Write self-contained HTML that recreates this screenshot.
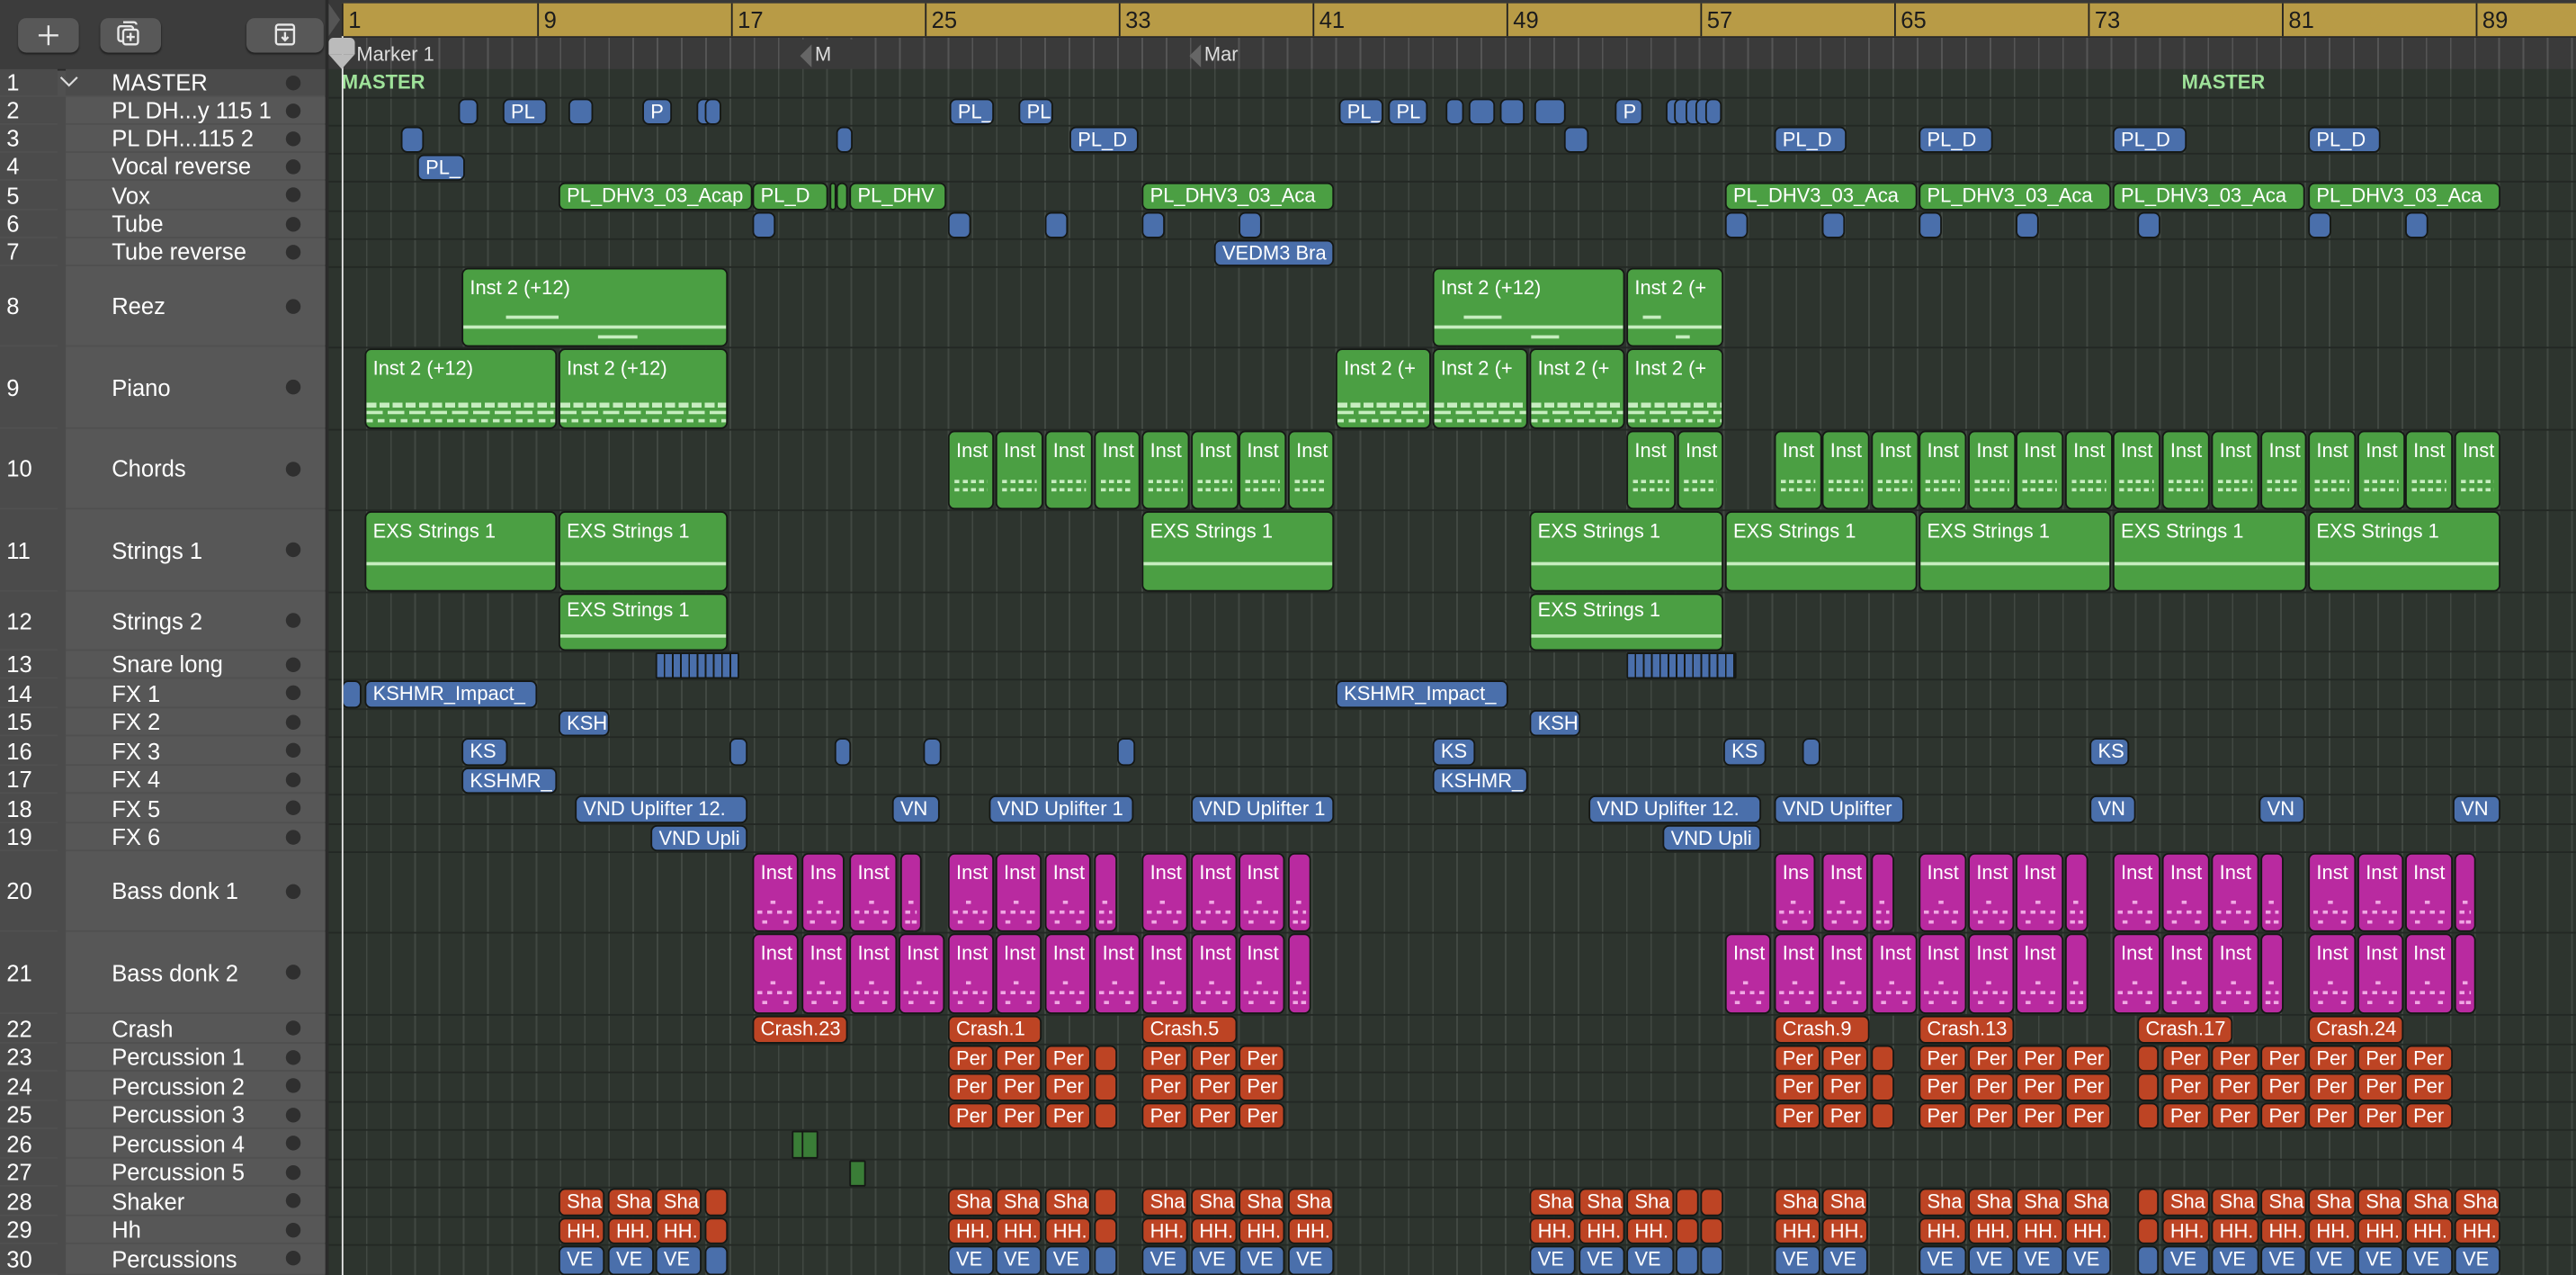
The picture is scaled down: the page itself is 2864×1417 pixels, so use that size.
<!DOCTYPE html>
<html><head><meta charset="utf-8">
<style>
html,body{margin:0;padding:0;background:#2d342e;width:2864px;height:1416px;overflow:hidden}
#w{position:absolute;left:0;top:0;width:1568px;height:776px;transform:scale(1.826531);transform-origin:0 0;font-family:"Liberation Sans",sans-serif;background:#2d342e;overflow:hidden}
.row{position:absolute;left:0;width:1568px}
.row>b{position:absolute;top:0;bottom:0;box-sizing:border-box;border:1px solid #151815;border-radius:4px;color:#fff;font:400 12px/15px "Liberation Sans",sans-serif;padding:0 4px;overflow:hidden;white-space:nowrap}
.b>b{background:#4a6fab}
.g>b{background:#4b9f43}
.m>b{background:#b92aa0}
.o>b{background:#bd4424}
.d>b{background:#3a7d37}
.gt>b{padding-top:4px;background:linear-gradient(#c6edbf,#c6edbf) no-repeat 0 34px/100% 2px,linear-gradient(#c6edbf,#c6edbf) no-repeat 20% 28px/20% 2px,linear-gradient(#c6edbf,#c6edbf) no-repeat 60% 40px/15% 2px,#4b9f43}
.pn>b{padding-top:4px;background:repeating-linear-gradient(90deg,#c6edbf 0 6px,transparent 6px 8px) no-repeat 0 32px/100% 3px,repeating-linear-gradient(90deg,#c6edbf 0 10px,transparent 10px 13px) no-repeat 0 37px/100% 2px,repeating-linear-gradient(90deg,#c6edbf 0 4px,transparent 4px 7px) no-repeat 0 42px/100% 2px,#4b9f43}
.ch>b{padding-top:4px;background:repeating-linear-gradient(90deg,#c6edbf 0 3px,transparent 3px 5px) no-repeat 3px 29px/calc(100% - 6px) 2px,repeating-linear-gradient(90deg,#c6edbf 0 3px,transparent 3px 5px) no-repeat 3px 34px/calc(100% - 6px) 2px,#4b9f43}
.st>b{padding-top:4px;background:linear-gradient(#c6edbf,#c6edbf) no-repeat 0 30px/100% 2px,#4b9f43}
.s2>b{padding-top:2px;background:linear-gradient(#c6edbf,#c6edbf) no-repeat 0 24px/100% 2px,#4b9f43}
.m>b{padding-top:4px;background:repeating-linear-gradient(90deg,#f0a8e3 0 3px,transparent 3px 6px) no-repeat 2px 34px/calc(100% - 4px) 2px,linear-gradient(#f0a8e3,#f0a8e3) no-repeat 45% 28px/3px 2px,linear-gradient(#f0a8e3,#f0a8e3) no-repeat 20% 40px/3px 2px,linear-gradient(#f0a8e3,#f0a8e3) no-repeat 80% 40px/3px 2px,#b92aa0}
.sn>b{background:repeating-linear-gradient(90deg,#4a6fab 0 4px,#151815 4px 5px)}
#grid{position:absolute;left:208px;top:42px;width:1360px;height:734px;background:repeating-linear-gradient(90deg,#414842 0 1px,transparent 1px 14.75px)}
.hl{position:absolute;left:200px;width:1368px;height:1px;background:#232824}
#hdr{position:absolute;left:0;top:0;width:198px;height:776px;background:#505050}
#tb{position:absolute;left:0;top:0;width:198px;height:42px;background:#3c3c3c;border-bottom:1px solid #2a2a2a}
.btn{position:absolute;top:11px;height:21px;background:#585858;border-radius:5px;box-shadow:0 1px 1px #222}
.tr{position:absolute;left:0;width:198px;color:#fff;font:14px "Liberation Sans",sans-serif}
.tr .n{position:absolute;left:0;top:0;bottom:1px;width:35px;background:#4b4b4b;padding-left:4px;box-sizing:border-box}
.tr .nm{position:absolute;left:40px;right:0;top:0;bottom:1px;background:#575757;padding-left:28px;box-sizing:border-box}
.tr .dt{position:absolute;left:174px;width:9px;height:9px;border-radius:50%;background:#2f2f2f}
#ruler{position:absolute;left:200px;top:0;width:1368px;height:42px;background:#383838}
#yel{position:absolute;left:208px;top:2px;width:1360px;height:20px;background:#b89b46;border-bottom:1px solid #2a2a2a}
.bn{position:absolute;top:2px;height:20px;border-left:1px solid #222;color:#1c1c1c;font:14px/20px "Liberation Sans",sans-serif;padding-left:3px}
#mk{position:absolute;left:208px;top:23px;width:1360px;height:19px;background:repeating-linear-gradient(90deg,#555 0 1px,transparent 1px 14.75px),#3a3a3a}
.mt{position:absolute;top:24px;color:#ddd;font:12px/18px "Liberation Sans",sans-serif}
.ms{position:absolute;top:43px;color:#9fe39a;font:700 12px/15px "Liberation Sans",sans-serif}
</style></head><body><div id="w">

<div id="ruler"></div>
<div id="yel"></div>
<div style="position:absolute;left:200px;top:2px;width:0;height:0;border-top:10px solid transparent;border-bottom:10px solid transparent;border-left:7px solid #555"></div>
<div class="bn" style="left:208px">1</div>
<div class="bn" style="left:327px">9</div>
<div class="bn" style="left:445px">17</div>
<div class="bn" style="left:563px">25</div>
<div class="bn" style="left:681px">33</div>
<div class="bn" style="left:799px">41</div>
<div class="bn" style="left:917px">49</div>
<div class="bn" style="left:1035px">57</div>
<div class="bn" style="left:1153px">65</div>
<div class="bn" style="left:1271px">73</div>
<div class="bn" style="left:1389px">81</div>
<div class="bn" style="left:1507px">89</div>
<div id="mk"></div>
<div class="mt" style="left:217px">Marker 1</div>
<div style="position:absolute;left:487px;top:24px;width:40px;height:18px;background:#3a3a3a"></div>
<div style="position:absolute;left:487px;top:27px;width:0;height:0;border-top:7px solid transparent;border-bottom:7px solid transparent;border-right:7px solid #666"></div>
<div class="mt" style="left:496px">M</div>
<div style="position:absolute;left:724px;top:27px;width:0;height:0;border-top:7px solid transparent;border-bottom:7px solid transparent;border-right:7px solid #666"></div>
<div class="mt" style="left:733px">Mar</div>

<div id="grid"></div>
<div class="hl" style="top:59px"></div><div class="hl" style="top:76px"></div><div class="hl" style="top:93px"></div><div class="hl" style="top:110px"></div><div class="hl" style="top:128px"></div><div class="hl" style="top:145px"></div><div class="hl" style="top:162px"></div><div class="hl" style="top:211px"></div><div class="hl" style="top:261px"></div><div class="hl" style="top:310px"></div><div class="hl" style="top:360px"></div><div class="hl" style="top:396px"></div><div class="hl" style="top:413px"></div><div class="hl" style="top:431px"></div><div class="hl" style="top:448px"></div><div class="hl" style="top:466px"></div><div class="hl" style="top:483px"></div><div class="hl" style="top:501px"></div><div class="hl" style="top:518px"></div><div class="hl" style="top:567px"></div><div class="hl" style="top:617px"></div><div class="hl" style="top:635px"></div><div class="hl" style="top:652px"></div><div class="hl" style="top:670px"></div><div class="hl" style="top:687px"></div><div class="hl" style="top:705px"></div><div class="hl" style="top:722px"></div><div class="hl" style="top:740px"></div><div class="hl" style="top:757px"></div>

<div class="ms" style="left:208px">MASTER</div>
<div class="ms" style="left:1328px">MASTER</div>

<!-- row 2 -->
<div class="row b" style="top:60px;height:16px"><b style="left:279px;width:12px"></b><b style="left:306px;width:27px">PL</b><b style="left:346px;width:15px"></b><b style="left:391px;width:18px">P</b><b style="left:424px;width:5px"></b><b style="left:429px;width:7px"></b><b style="left:578px;width:27px">PL_</b><b style="left:620px;width:21px">PL</b><b style="left:815px;width:27px">PL_</b><b style="left:845px;width:24px">PL</b><b style="left:880px;width:11px"></b><b style="left:894px;width:16px"></b><b style="left:913px;width:15px"></b><b style="left:934px;width:19px"></b><b style="left:983px;width:17px">P</b><b style="left:1014px;width:5px"></b><b style="left:1019px;width:6px"></b><b style="left:1026px;width:6px"></b><b style="left:1032px;width:6px"></b><b style="left:1038px;width:6px"></b></div>
<!-- row 3 -->
<div class="row b" style="top:77px;height:16px"><b style="left:244px;width:14px"></b><b style="left:509px;width:9px"></b><b style="left:651px;width:42px">PL_D</b><b style="left:952px;width:15px"></b><b style="left:1080px;width:44px">PL_D</b><b style="left:1168px;width:45px">PL_D</b><b style="left:1286px;width:45px">PL_D</b><b style="left:1405px;width:44px">PL_D</b></div>
<!-- row 4 -->
<div class="row b" style="top:94px;height:16px"><b style="left:254px;width:29px">PL_</b></div>
<!-- row 5 -->
<div class="row g" style="top:111px;height:17px"><b style="left:340px;width:118px">PL_DHV3_03_Acap</b><b style="left:458px;width:46px">PL_D</b><b style="left:505px;width:4px;padding:0"></b><b style="left:509px;width:7px;padding:0"></b><b style="left:517px;width:59px">PL_DHV</b><b style="left:695px;width:117px">PL_DHV3_03_Aca</b><b style="left:1050px;width:117px">PL_DHV3_03_Aca</b><b style="left:1168px;width:117px">PL_DHV3_03_Aca</b><b style="left:1286px;width:117px">PL_DHV3_03_Aca</b><b style="left:1405px;width:117px">PL_DHV3_03_Aca</b></div>
<!-- row 6 -->
<div class="row b" style="top:129px;height:16px"><b style="left:458px;width:14px"></b><b style="left:577px;width:14px"></b><b style="left:636px;width:14px"></b><b style="left:695px;width:14px"></b><b style="left:754px;width:14px"></b><b style="left:1050px;width:14px"></b><b style="left:1109px;width:14px"></b><b style="left:1168px;width:14px"></b><b style="left:1227px;width:14px"></b><b style="left:1301px;width:14px"></b><b style="left:1405px;width:14px"></b><b style="left:1464px;width:14px"></b></div>
<!-- row 7 -->
<div class="row b" style="top:146px;height:16px"><b style="left:739px;width:73px">VEDM3 Bra</b></div>
<!-- row 8 -->
<div class="row gt" style="top:163px;height:48px"><b style="left:281px;width:162px">Inst 2 (+12)</b><b style="left:872px;width:117px">Inst 2 (+12)</b><b style="left:990px;width:59px">Inst 2 (+</b></div>
<!-- row 9 -->
<div class="row pn" style="top:212px;height:49px"><b style="left:222px;width:117px">Inst 2 (+12)</b><b style="left:340px;width:103px">Inst 2 (+12)</b><b style="left:813px;width:58px">Inst 2 (+</b><b style="left:872px;width:58px">Inst 2 (+</b><b style="left:931px;width:58px">Inst 2 (+</b><b style="left:990px;width:59px">Inst 2 (+</b></div>
<!-- row 10 -->
<div class="row ch" style="top:262px;height:48px"><b style="left:577px;width:28px">Inst</b><b style="left:606px;width:29px">Inst</b><b style="left:636px;width:29px">Inst</b><b style="left:666px;width:28px">Inst</b><b style="left:695px;width:29px">Inst</b><b style="left:725px;width:29px">Inst</b><b style="left:754px;width:29px">Inst</b><b style="left:784px;width:28px">Inst</b><b style="left:990px;width:30px">Inst</b><b style="left:1021px;width:28px">Inst</b><b style="left:1080px;width:29px">Inst</b><b style="left:1109px;width:29px">Inst</b><b style="left:1139px;width:29px">Inst</b><b style="left:1168px;width:29px">Inst</b><b style="left:1198px;width:29px">Inst</b><b style="left:1227px;width:29px">Inst</b><b style="left:1257px;width:29px">Inst</b><b style="left:1286px;width:29px">Inst</b><b style="left:1316px;width:29px">Inst</b><b style="left:1346px;width:29px">Inst</b><b style="left:1376px;width:28px">Inst</b><b style="left:1405px;width:29px">Inst</b><b style="left:1435px;width:29px">Inst</b><b style="left:1464px;width:29px">Inst</b><b style="left:1494px;width:28px">Inst</b></div>
<!-- row 11 -->
<div class="row st" style="top:311px;height:49px"><b style="left:222px;width:117px">EXS Strings 1</b><b style="left:340px;width:103px">EXS Strings 1</b><b style="left:695px;width:117px">EXS Strings 1</b><b style="left:931px;width:118px">EXS Strings 1</b><b style="left:1050px;width:117px">EXS Strings 1</b><b style="left:1168px;width:117px">EXS Strings 1</b><b style="left:1286px;width:118px">EXS Strings 1</b><b style="left:1405px;width:117px">EXS Strings 1</b></div>
<!-- row 12 -->
<div class="row s2" style="top:361px;height:35px"><b style="left:340px;width:103px">EXS Strings 1</b><b style="left:931px;width:118px">EXS Strings 1</b></div>
<!-- row 13 -->
<div class="row sn" style="top:397px;height:16px"><b style="left:399px;width:51px;border-radius:1px"></b><b style="left:990px;width:67px;border-radius:1px"></b></div>
<!-- row 14 -->
<div class="row b" style="top:414px;height:17px"><b style="left:208px;width:12px"></b><b style="left:222px;width:105px">KSHMR_Impact_</b><b style="left:813px;width:105px">KSHMR_Impact_</b></div>
<!-- row 15 -->
<div class="row b" style="top:432px;height:16px"><b style="left:340px;width:31px">KSH</b><b style="left:931px;width:31px">KSH</b></div>
<!-- row 16 -->
<div class="row b" style="top:449px;height:17px"><b style="left:281px;width:28px">KS</b><b style="left:444px;width:11px"></b><b style="left:508px;width:9px"></b><b style="left:562px;width:11px"></b><b style="left:680px;width:11px"></b><b style="left:872px;width:26px">KS</b><b style="left:1049px;width:26px">KS</b><b style="left:1097px;width:11px"></b><b style="left:1272px;width:24px">KS</b></div>
<!-- row 17 -->
<div class="row b" style="top:467px;height:16px"><b style="left:281px;width:58px">KSHMR_</b><b style="left:872px;width:58px">KSHMR_</b></div>
<!-- row 18 -->
<div class="row b" style="top:484px;height:17px"><b style="left:350px;width:105px">VND Uplifter 12.</b><b style="left:543px;width:29px">VN</b><b style="left:602px;width:88px">VND Uplifter 1</b><b style="left:725px;width:87px">VND Uplifter 1</b><b style="left:967px;width:105px">VND Uplifter 12.</b><b style="left:1080px;width:79px">VND Uplifter</b><b style="left:1272px;width:28px">VN</b><b style="left:1375px;width:28px">VN</b><b style="left:1493px;width:29px">VN</b></div>
<!-- row 19 -->
<div class="row b" style="top:502px;height:16px"><b style="left:396px;width:59px">VND Upli</b><b style="left:1012px;width:60px">VND Upli</b></div>
<!-- row 20 -->
<div class="row m" style="top:519px;height:48px"><b style="left:458px;width:28px">Inst</b><b style="left:488px;width:26px">Ins</b><b style="left:517px;width:29px">Inst</b><b style="left:548px;width:13px"></b><b style="left:577px;width:28px">Inst</b><b style="left:606px;width:28px">Inst</b><b style="left:636px;width:28px">Inst</b><b style="left:666px;width:14px"></b><b style="left:695px;width:28px">Inst</b><b style="left:725px;width:28px">Inst</b><b style="left:754px;width:28px">Inst</b><b style="left:784px;width:14px"></b><b style="left:1080px;width:25px">Ins</b><b style="left:1109px;width:28px">Inst</b><b style="left:1139px;width:14px"></b><b style="left:1168px;width:29px">Inst</b><b style="left:1198px;width:28px">Inst</b><b style="left:1227px;width:29px">Inst</b><b style="left:1257px;width:14px"></b><b style="left:1286px;width:29px">Inst</b><b style="left:1316px;width:29px">Inst</b><b style="left:1346px;width:29px">Inst</b><b style="left:1376px;width:14px"></b><b style="left:1405px;width:29px">Inst</b><b style="left:1435px;width:28px">Inst</b><b style="left:1464px;width:29px">Inst</b><b style="left:1494px;width:13px"></b></div>
<!-- row 21 -->
<div class="row m" style="top:568px;height:49px"><b style="left:458px;width:28px">Inst</b><b style="left:488px;width:28px">Inst</b><b style="left:517px;width:29px">Inst</b><b style="left:547px;width:28px">Inst</b><b style="left:577px;width:28px">Inst</b><b style="left:606px;width:28px">Inst</b><b style="left:636px;width:28px">Inst</b><b style="left:666px;width:28px">Inst</b><b style="left:695px;width:28px">Inst</b><b style="left:725px;width:28px">Inst</b><b style="left:754px;width:28px">Inst</b><b style="left:784px;width:14px"></b><b style="left:1050px;width:28px">Inst</b><b style="left:1080px;width:28px">Inst</b><b style="left:1109px;width:28px">Inst</b><b style="left:1139px;width:28px">Inst</b><b style="left:1168px;width:29px">Inst</b><b style="left:1198px;width:28px">Inst</b><b style="left:1227px;width:29px">Inst</b><b style="left:1257px;width:14px"></b><b style="left:1286px;width:29px">Inst</b><b style="left:1316px;width:29px">Inst</b><b style="left:1346px;width:29px">Inst</b><b style="left:1376px;width:14px"></b><b style="left:1405px;width:29px">Inst</b><b style="left:1435px;width:28px">Inst</b><b style="left:1464px;width:29px">Inst</b><b style="left:1494px;width:13px"></b></div>
<!-- row 22 -->
<div class="row o" style="top:618px;height:17px"><b style="left:458px;width:58px">Crash.23</b><b style="left:577px;width:57px">Crash.1</b><b style="left:695px;width:58px">Crash.5</b><b style="left:1080px;width:58px">Crash.9</b><b style="left:1168px;width:58px">Crash.13</b><b style="left:1301px;width:58px">Crash.17</b><b style="left:1405px;width:58px">Crash.24</b></div>
<!-- rows 23-25 -->
<div class="row o" style="top:636px;height:16px"><b style="left:577px;width:28px">Per</b><b style="left:606px;width:28px">Per</b><b style="left:636px;width:28px">Per</b><b style="left:666px;width:14px"></b><b style="left:695px;width:28px">Per</b><b style="left:725px;width:28px">Per</b><b style="left:754px;width:28px">Per</b><b style="left:1080px;width:28px">Per</b><b style="left:1109px;width:28px">Per</b><b style="left:1139px;width:14px"></b><b style="left:1168px;width:29px">Per</b><b style="left:1198px;width:28px">Per</b><b style="left:1227px;width:29px">Per</b><b style="left:1257px;width:28px">Per</b><b style="left:1301px;width:13px"></b><b style="left:1316px;width:29px">Per</b><b style="left:1346px;width:29px">Per</b><b style="left:1376px;width:28px">Per</b><b style="left:1405px;width:29px">Per</b><b style="left:1435px;width:28px">Per</b><b style="left:1464px;width:29px">Per</b></div>
<div class="row o" style="top:653px;height:17px"><b style="left:577px;width:28px">Per</b><b style="left:606px;width:28px">Per</b><b style="left:636px;width:28px">Per</b><b style="left:666px;width:14px"></b><b style="left:695px;width:28px">Per</b><b style="left:725px;width:28px">Per</b><b style="left:754px;width:28px">Per</b><b style="left:1080px;width:28px">Per</b><b style="left:1109px;width:28px">Per</b><b style="left:1139px;width:14px"></b><b style="left:1168px;width:29px">Per</b><b style="left:1198px;width:28px">Per</b><b style="left:1227px;width:29px">Per</b><b style="left:1257px;width:28px">Per</b><b style="left:1301px;width:13px"></b><b style="left:1316px;width:29px">Per</b><b style="left:1346px;width:29px">Per</b><b style="left:1376px;width:28px">Per</b><b style="left:1405px;width:29px">Per</b><b style="left:1435px;width:28px">Per</b><b style="left:1464px;width:29px">Per</b></div>
<div class="row o" style="top:671px;height:16px"><b style="left:577px;width:28px">Per</b><b style="left:606px;width:28px">Per</b><b style="left:636px;width:28px">Per</b><b style="left:666px;width:14px"></b><b style="left:695px;width:28px">Per</b><b style="left:725px;width:28px">Per</b><b style="left:754px;width:28px">Per</b><b style="left:1080px;width:28px">Per</b><b style="left:1109px;width:28px">Per</b><b style="left:1139px;width:14px"></b><b style="left:1168px;width:29px">Per</b><b style="left:1198px;width:28px">Per</b><b style="left:1227px;width:29px">Per</b><b style="left:1257px;width:28px">Per</b><b style="left:1301px;width:13px"></b><b style="left:1316px;width:29px">Per</b><b style="left:1346px;width:29px">Per</b><b style="left:1376px;width:28px">Per</b><b style="left:1405px;width:29px">Per</b><b style="left:1435px;width:28px">Per</b><b style="left:1464px;width:29px">Per</b></div>
<!-- row 26,27 -->
<div class="row d" style="top:688px;height:17px"><b style="left:482px;width:7px;border-radius:1px"></b><b style="left:488px;width:8px;border-radius:1px"></b></div>
<div class="row d" style="top:706px;height:16px"><b style="left:517px;width:9px;border-radius:1px"></b></div>
<!-- row 28 -->
<div class="row o" style="top:723px;height:17px"><b style="left:340px;width:28px">Sha</b><b style="left:370px;width:28px">Sha</b><b style="left:399px;width:28px">Sha</b><b style="left:429px;width:14px"></b><b style="left:577px;width:28px">Sha</b><b style="left:606px;width:28px">Sha</b><b style="left:636px;width:28px">Sha</b><b style="left:666px;width:14px"></b><b style="left:695px;width:28px">Sha</b><b style="left:725px;width:28px">Sha</b><b style="left:754px;width:28px">Sha</b><b style="left:784px;width:28px">Sha</b><b style="left:931px;width:28px">Sha</b><b style="left:961px;width:28px">Sha</b><b style="left:990px;width:29px">Sha</b><b style="left:1020px;width:14px"></b><b style="left:1035px;width:14px"></b><b style="left:1080px;width:28px">Sha</b><b style="left:1109px;width:28px">Sha</b><b style="left:1168px;width:29px">Sha</b><b style="left:1198px;width:28px">Sha</b><b style="left:1227px;width:29px">Sha</b><b style="left:1257px;width:28px">Sha</b><b style="left:1301px;width:13px"></b><b style="left:1316px;width:29px">Sha</b><b style="left:1346px;width:29px">Sha</b><b style="left:1376px;width:28px">Sha</b><b style="left:1405px;width:29px">Sha</b><b style="left:1435px;width:28px">Sha</b><b style="left:1464px;width:29px">Sha</b><b style="left:1494px;width:28px">Sha</b></div>
<!-- row 29 -->
<div class="row o" style="top:741px;height:16px"><b style="left:340px;width:28px">HH.</b><b style="left:370px;width:28px">HH.</b><b style="left:399px;width:28px">HH.</b><b style="left:429px;width:14px"></b><b style="left:577px;width:28px">HH.</b><b style="left:606px;width:28px">HH.</b><b style="left:636px;width:28px">HH.</b><b style="left:666px;width:14px"></b><b style="left:695px;width:28px">HH.</b><b style="left:725px;width:28px">HH.</b><b style="left:754px;width:28px">HH.</b><b style="left:784px;width:28px">HH.</b><b style="left:931px;width:28px">HH.</b><b style="left:961px;width:28px">HH.</b><b style="left:990px;width:29px">HH.</b><b style="left:1020px;width:14px"></b><b style="left:1035px;width:14px"></b><b style="left:1080px;width:28px">HH.</b><b style="left:1109px;width:28px">HH.</b><b style="left:1168px;width:29px">HH.</b><b style="left:1198px;width:28px">HH.</b><b style="left:1227px;width:29px">HH.</b><b style="left:1257px;width:28px">HH.</b><b style="left:1301px;width:13px"></b><b style="left:1316px;width:29px">HH.</b><b style="left:1346px;width:29px">HH.</b><b style="left:1376px;width:28px">HH.</b><b style="left:1405px;width:29px">HH.</b><b style="left:1435px;width:28px">HH.</b><b style="left:1464px;width:29px">HH.</b><b style="left:1494px;width:28px">HH.</b></div>
<!-- row 30 -->
<div class="row b" style="top:758px;height:18px"><b style="left:340px;width:28px">VE</b><b style="left:370px;width:28px">VE</b><b style="left:399px;width:28px">VE</b><b style="left:429px;width:14px"></b><b style="left:577px;width:28px">VE</b><b style="left:606px;width:28px">VE</b><b style="left:636px;width:28px">VE</b><b style="left:666px;width:14px"></b><b style="left:695px;width:28px">VE</b><b style="left:725px;width:28px">VE</b><b style="left:754px;width:28px">VE</b><b style="left:784px;width:28px">VE</b><b style="left:931px;width:28px">VE</b><b style="left:961px;width:28px">VE</b><b style="left:990px;width:29px">VE</b><b style="left:1020px;width:14px"></b><b style="left:1035px;width:14px"></b><b style="left:1080px;width:28px">VE</b><b style="left:1109px;width:28px">VE</b><b style="left:1168px;width:29px">VE</b><b style="left:1198px;width:28px">VE</b><b style="left:1227px;width:29px">VE</b><b style="left:1257px;width:28px">VE</b><b style="left:1301px;width:13px"></b><b style="left:1316px;width:29px">VE</b><b style="left:1346px;width:29px">VE</b><b style="left:1376px;width:28px">VE</b><b style="left:1405px;width:29px">VE</b><b style="left:1435px;width:28px">VE</b><b style="left:1464px;width:29px">VE</b><b style="left:1494px;width:28px">VE</b></div>

<!-- playhead -->
<div style="position:absolute;left:208px;top:22px;width:1px;height:754px;background:#e8e8e8"></div>
<div style="position:absolute;left:200px;top:23px;width:16px;height:10px;background:#bbb;border-radius:3px 3px 0 0"></div>
<div style="position:absolute;left:200px;top:33px;width:0;height:0;border-left:8px solid transparent;border-right:8px solid transparent;border-top:9px solid #bbb"></div>

<!-- header -->
<div id="hdr"></div>
<div style="position:absolute;left:198px;top:0;width:2px;height:776px;background:#2a2a2a"></div>
<div id="tb"></div>
<div class="btn" style="left:11px;width:37px"></div>
<div class="btn" style="left:61px;width:37px"></div>
<div class="btn" style="left:150px;width:47px"></div>
<svg style="position:absolute;left:0;top:0" width="198" height="42" fill="none" stroke="#e8e8e8" stroke-width="1.3">
<path d="M29.5 15.5v12M23.5 21.5h12"/>
<rect x="72" y="16" width="9" height="9" rx="1.5"/><path d="M75 13.5h6.5a1.5 1.5 0 0 1 1.5 1.5v0" /><rect x="75" y="18" width="9" height="9" rx="1.5" fill="#585858"/><path d="M79.5 20v5M77 22.5h5"/>
<rect x="168" y="15" width="11" height="12" rx="1.5"/><path d="M168 18h11M173.5 19.5v5M171.5 22.5l2 2 2-2"/>
</svg>

<div class="tr" style="top:42px;height:17px;line-height:17px"><div class="n" style="background:#4b4b4b">1</div><div class="nm" style="background:#4b4b4b">MASTER</div><div class="dt" style="top:4px"></div></div>
<svg style="position:absolute;left:36px;top:46px" width="12" height="8" fill="none" stroke="#ddd" stroke-width="1.2"><path d="M1 1l5 5 5-5"/></svg>
<div class="tr" style="top:59px;height:17px;line-height:17px"><div class="n">2</div><div class="nm">PL DH...y 115 1</div><div class="dt" style="top:4px"></div></div>
<div class="tr" style="top:76px;height:17px;line-height:17px"><div class="n">3</div><div class="nm">PL DH...115 2</div><div class="dt" style="top:4px"></div></div>
<div class="tr" style="top:93px;height:17px;line-height:17px"><div class="n">4</div><div class="nm">Vocal reverse</div><div class="dt" style="top:4px"></div></div>
<div class="tr" style="top:110px;height:18px;line-height:18px"><div class="n">5</div><div class="nm">Vox</div><div class="dt" style="top:4px"></div></div>
<div class="tr" style="top:128px;height:17px;line-height:17px"><div class="n">6</div><div class="nm">Tube</div><div class="dt" style="top:4px"></div></div>
<div class="tr" style="top:145px;height:17px;line-height:17px"><div class="n">7</div><div class="nm">Tube reverse</div><div class="dt" style="top:4px"></div></div>
<div class="tr" style="top:162px;height:49px;line-height:49px"><div class="n">8</div><div class="nm">Reez</div><div class="dt" style="top:20px"></div></div>
<div class="tr" style="top:211px;height:50px;line-height:50px"><div class="n">9</div><div class="nm">Piano</div><div class="dt" style="top:20px"></div></div>
<div class="tr" style="top:261px;height:49px;line-height:49px"><div class="n">10</div><div class="nm">Chords</div><div class="dt" style="top:20px"></div></div>
<div class="tr" style="top:310px;height:50px;line-height:50px"><div class="n">11</div><div class="nm">Strings 1</div><div class="dt" style="top:20px"></div></div>
<div class="tr" style="top:360px;height:36px;line-height:36px"><div class="n">12</div><div class="nm">Strings 2</div><div class="dt" style="top:13px"></div></div>
<div class="tr" style="top:396px;height:17px;line-height:17px"><div class="n">13</div><div class="nm">Snare long</div><div class="dt" style="top:4px"></div></div>
<div class="tr" style="top:413px;height:18px;line-height:18px"><div class="n">14</div><div class="nm">FX 1</div><div class="dt" style="top:4px"></div></div>
<div class="tr" style="top:431px;height:17px;line-height:17px"><div class="n">15</div><div class="nm">FX 2</div><div class="dt" style="top:4px"></div></div>
<div class="tr" style="top:448px;height:18px;line-height:18px"><div class="n">16</div><div class="nm">FX 3</div><div class="dt" style="top:4px"></div></div>
<div class="tr" style="top:466px;height:17px;line-height:17px"><div class="n">17</div><div class="nm">FX 4</div><div class="dt" style="top:4px"></div></div>
<div class="tr" style="top:483px;height:18px;line-height:18px"><div class="n">18</div><div class="nm">FX 5</div><div class="dt" style="top:4px"></div></div>
<div class="tr" style="top:501px;height:17px;line-height:17px"><div class="n">19</div><div class="nm">FX 6</div><div class="dt" style="top:4px"></div></div>
<div class="tr" style="top:518px;height:49px;line-height:49px"><div class="n">20</div><div class="nm">Bass donk 1</div><div class="dt" style="top:20px"></div></div>
<div class="tr" style="top:567px;height:50px;line-height:50px"><div class="n">21</div><div class="nm">Bass donk 2</div><div class="dt" style="top:20px"></div></div>
<div class="tr" style="top:617px;height:18px;line-height:18px"><div class="n">22</div><div class="nm">Crash</div><div class="dt" style="top:4px"></div></div>
<div class="tr" style="top:635px;height:17px;line-height:17px"><div class="n">23</div><div class="nm">Percussion 1</div><div class="dt" style="top:4px"></div></div>
<div class="tr" style="top:652px;height:18px;line-height:18px"><div class="n">24</div><div class="nm">Percussion 2</div><div class="dt" style="top:4px"></div></div>
<div class="tr" style="top:670px;height:17px;line-height:17px"><div class="n">25</div><div class="nm">Percussion 3</div><div class="dt" style="top:4px"></div></div>
<div class="tr" style="top:687px;height:18px;line-height:18px"><div class="n">26</div><div class="nm">Percussion 4</div><div class="dt" style="top:4px"></div></div>
<div class="tr" style="top:705px;height:17px;line-height:17px"><div class="n">27</div><div class="nm">Percussion 5</div><div class="dt" style="top:4px"></div></div>
<div class="tr" style="top:722px;height:18px;line-height:18px"><div class="n">28</div><div class="nm">Shaker</div><div class="dt" style="top:4px"></div></div>
<div class="tr" style="top:740px;height:17px;line-height:17px"><div class="n">29</div><div class="nm">Hh</div><div class="dt" style="top:4px"></div></div>
<div class="tr" style="top:757px;height:19px;line-height:18px"><div class="n">30</div><div class="nm">Percussions</div><div class="dt" style="top:4px"></div></div>
<div style="position:absolute;left:35px;top:59px;width:5px;height:717px;background:#4b4b4b"></div>
</div></body></html>
